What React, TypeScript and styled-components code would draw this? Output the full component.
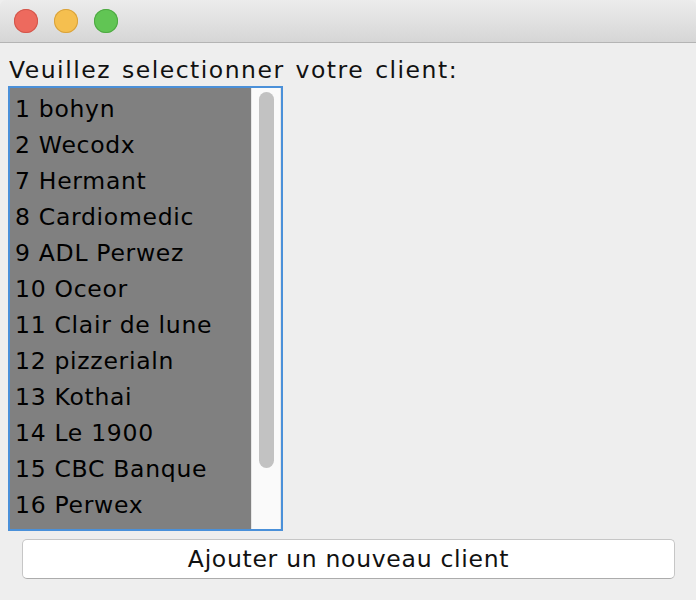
import React from "react";
import styled, { createGlobalStyle } from "styled-components";

const clients = [
  "1 bohyn",
  "2 Wecodx",
  "7 Hermant",
  "8 Cardiomedic",
  "9 ADL Perwez",
  "10 Oceor",
  "11 Clair de lune",
  "12 pizzerialn",
  "13 Kothai",
  "14 Le 1900",
  "15 CBC Banque",
  "16 Perwex",
];

const lights = [
  { fill: "#ed6a5e", ring: "#d2574c" },
  { fill: "#f5bf4f", ring: "#d8a23c" },
  { fill: "#61c554", ring: "#4ea843" },
];

const GlobalStyle = createGlobalStyle`
  html, body {
    margin: 0;
    padding: 0;
    background: #eeeeee;
  }
  body {
    font-family: "DejaVu Sans", "Noto Sans", sans-serif;
  }
`;

const Window = styled.div`
  width: 696px;
  height: 600px;
  display: flex;
  flex-direction: column;
  background: #eeeeee;
  overflow: hidden;
  border-radius: 6px 6px 0 0;
`;

const TitleBar = styled.div`
  height: 42px;
  flex-shrink: 0;
  display: flex;
  align-items: center;
  gap: 16px;
  padding-left: 14px;
  background: linear-gradient(#ececec, #d6d6d6);
  border-bottom: 1px solid #b4b4b4;
`;

const Light = styled.span<{ fill: string; ring: string }>`
  width: 24px;
  height: 24px;
  border-radius: 50%;
  background: ${({ fill }) => fill};
  box-shadow: inset 0 0 0 1px ${({ ring }) => ring};
`;

const Content = styled.div`
  display: flex;
  flex-direction: column;
  padding: 12px 0 0 8px;
`;

const Label = styled.div`
  font-size: 23.5px;
  line-height: 31px;
  letter-spacing: 1.5px;
  word-spacing: 2px;
  color: #111;
  padding-left: 1px;
`;

const ListBox = styled.div`
  width: 271px;
  height: 441px;
  display: flex;
  border: 2px solid #4a90d9;
  background: #808080;
`;

const Items = styled.ul`
  flex: 1;
  margin: 0;
  padding: 3px 0 0;
  list-style: none;
  overflow: hidden;
`;

const Item = styled.li`
  height: 36px;
  line-height: 36px;
  padding-left: 5px;
  font-size: 23.5px;
  letter-spacing: 0.7px;
  color: #000;
  white-space: nowrap;
`;

const Track = styled.div`
  width: 30px;
  display: flex;
  justify-content: center;
  padding-top: 4px;
  background: #fafafa;
  border-left: 1px solid #e6e6e6;
  border-right: 1px solid #e6e6e6;
  box-sizing: border-box;
`;

const Thumb = styled.div`
  width: 15px;
  height: 376px;
  border-radius: 8px;
  background: #c2c2c2;
`;

const Button = styled.button`
  margin: 8px 0 0 14px;
  width: 653px;
  height: 40px;
  background: #ffffff;
  border: 1px solid #c6c6c6;
  border-bottom-color: #acacac;
  border-radius: 5px;
  font-family: "DejaVu Sans", "Noto Sans", sans-serif;
  font-size: 23.5px;
  letter-spacing: 0.7px;
  color: #111;
  padding: 0;
`;

export default function App() {
  return (
    <>
      <GlobalStyle />
      <Window>
        <TitleBar>
          {lights.map((l) => (
            <Light key={l.fill} fill={l.fill} ring={l.ring} />
          ))}
        </TitleBar>
        <Content>
          <Label>Veuillez selectionner votre client:</Label>
          <ListBox>
            <Items>
              {clients.map((c) => (
                <Item key={c}>{c}</Item>
              ))}
            </Items>
            <Track>
              <Thumb />
            </Track>
          </ListBox>
          <Button>Ajouter un nouveau client</Button>
        </Content>
      </Window>
    </>
  );
}
